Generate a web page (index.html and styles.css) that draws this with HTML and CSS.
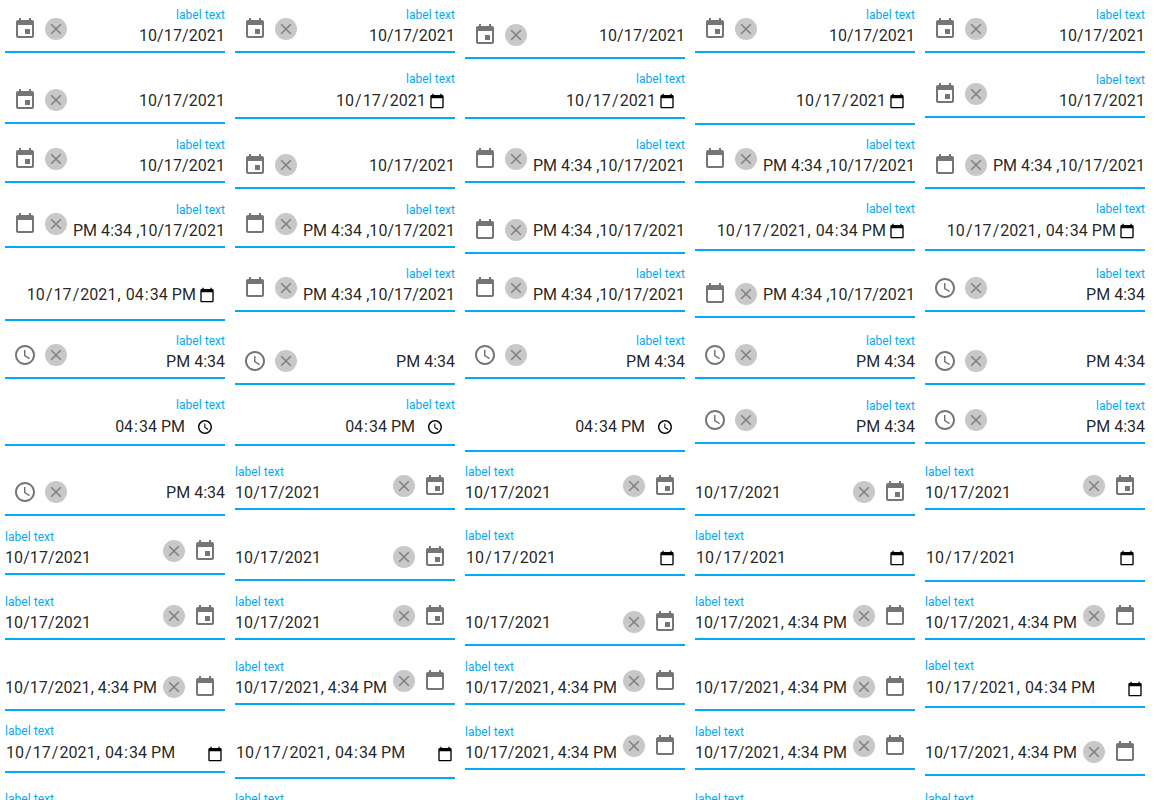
FILE: index.html
```html
<!DOCTYPE html>
<html lang="en">
<head>
<meta charset="utf-8">
<title>Date boxes</title>
<link rel="stylesheet" href="styles.css">
</head>
<body>
<svg class="sprite" aria-hidden="true">
  <symbol id="event" viewBox="0 0 24 24"><path d="M17 12h-5v5h5v-5zM16 1v2H8V1H6v2H5c-1.1 0-2 .9-2 2v14c0 1.1.9 2 2 2h14c1.1 0 2-.9 2-2V5c0-1.1-.9-2-2-2h-1V1h-2zm3 18H5V8h14v11z"/></symbol>
  <symbol id="calendar" viewBox="0 0 24 24"><path d="M16 1v2H8V1H6v2H5c-1.1 0-2 .9-2 2v14c0 1.1.9 2 2 2h14c1.1 0 2-.9 2-2V5c0-1.1-.9-2-2-2h-1V1h-2zm3 18H5V8h14v11z"/></symbol>
  <symbol id="clock" viewBox="0 0 24 24"><path d="M12 2C6.5 2 2 6.5 2 12s4.500 10 10 10 10-4.500 10-10S17.500 2 12 2zm0 18c-4.400 0-8-3.600-8-8s3.600-8 8-8 8 3.600 8 8-3.600 8-8 8zm.5-13H11v6l5.200 3.200.8-1.300-4.500-2.700V7z"/></symbol>
  <symbol id="time-picker" viewBox="0.5 0.5 23 23"><path d="M12 2C6.5 2 2 6.5 2 12s4.500 10 10 10 10-4.500 10-10S17.500 2 12 2zm0 18c-4.400 0-8-3.600-8-8s3.600-8 8-8 8 3.600 8 8-3.600 8-8 8zm.5-13H11v6l5.200 3.200.8-1.300-4.500-2.700V7z"/></symbol>
  <symbol id="clear" viewBox="0 0 22 22"><circle cx="11" cy="11" r="11" fill="#c8c8c8"/><path d="M6.200 6.200l9.600 9.600M15.800 6.200l-9.600 9.600" stroke="#7f7f7f" stroke-width="1.500" fill="none"/></symbol>
  <symbol id="picker" viewBox="0 0 24 24"><path d="M20 3h-1V1h-2v2H7V1H5v2H4c-1.100 0-2 .9-2 2v16c0 1.100.9 2 2 2h16c1.100 0 2-.9 2-2V5c0-1.100-.9-2-2-2zm0 18H4V8h16v13z"/></symbol>
</svg>
<main class="boxes" id="boxes"></main>
<script src="boxes.js"></script>
</body>
</html>
```
FILE: styles.css
```css
body {
  margin: 0;
  height: 800px;
  overflow: hidden;
  background: #fff;
  color: rgba(0, 0, 0, 0.87);
  font-family: Roboto, "Liberation Sans", sans-serif;
  font-size: 16px;
}
.sprite { display: none; }
.boxes {
  box-sizing: border-box;
  height: 800px;
  padding: 5px 5px 0;
  overflow: hidden;
}
.row {
  display: flex;
  align-items: flex-start;
  gap: 10px;
  height: 65px;
}
.row.short { height: 64px; }
.row.mid { height: 66px; }
.row.tall { height: 67px; }
.box {
  box-sizing: border-box;
  display: flex;
  flex: none;
  width: 220px;
  height: 48px;
  border-bottom: 2px solid #03a9f4;
}
.box.rtl { flex-direction: row-reverse; }
.box.bare { height: 54px; }
.box.n-date { height: 49px; }
.box.n-time { height: 50px; }
.box.n-datetime { height: 51px; }
.box.n-date.bare { height: 55px; }
.box.n-time.bare { height: 56px; }
.box.n-datetime.bare { height: 57px; }

.content {
  flex: 1;
  min-width: 0;
  padding-top: 3px;
  white-space: nowrap;
}
.native .content { padding-top: 2px; }
.bare .content { padding-top: 20px; }
.rtl .content { text-align: right; }
.label {
  height: 14px;
  margin-bottom: 3px;
  color: #03a9f4;
  font-size: 12px;
  line-height: 14px;
  letter-spacing: 0.04px;
}
.native .label { margin-bottom: 4px; }
.value {
  height: 20px;
  line-height: 22px;
}
.date .value { letter-spacing: 0.09px; }
.datetime .value { letter-spacing: 0.05px; }
.native .value { display: flex; }
.rtl.native .value { justify-content: flex-end; }
.fields { white-space: pre; }
.seg { padding: 0 1px; }
.seg.minute { padding-right: 0; }
.seg.period { padding-left: 0; }

.buttons {
  display: flex;
  flex: none;
  gap: 8px;
  align-items: center;
  height: 24px;
  padding: 12px 8px 0 0;
}
.rtl .buttons {
  flex-direction: row-reverse;
  padding: 12px 0 0 8px;
}
.box.bare .buttons { padding-top: 18px; }
.icon {
  width: 24px;
  height: 24px;
  fill: #757575;
}
.clear { width: 22px; height: 22px; }
.picker {
  flex: none;
  width: 16px;
  height: 16px;
  margin: 3px 10px 0 auto;
  fill: #000;
}
.n-datetime .picker { margin: 4px 2px 0 auto; }
.rtl .picker { margin: 3px 10px 0 2px; }
.rtl.n-time .picker { margin: 3px 12px 0 11px; }
```
FILE: boxes.js
```js
// Each entry: type, "-" suffix for a box without label, "!" prefix for a browser-style box.
const rows = [
  ["", "date date date- date date"],
  ["", "date- !date !date !date- date"],
  ["", "date date- datetime datetime datetime-"],
  ["short", "datetime datetime datetime- !datetime !datetime"],
  ["tall", "!datetime- datetime datetime datetime- time"],
  ["", "time time- time time time-"],
  ["mid", "!time !time !time- time time"],
  ["", "time- date date date- date"],
  ["", "date date- !date !date !date-"],
  ["", "date date date- datetime datetime"],
  ["", "datetime- datetime datetime datetime- !datetime"],
  ["tall", "!datetime !datetime- datetime datetime datetime-"],
  ["", "time time time- time time"]
];

// Left-to-right and right-to-left forms of each value.
const text = {
  date: ["10/17/2021", "10/17/2021"],
  datetime: ["10/17/2021, 4:34 PM", "PM 4:34 ,10/17/2021"],
  time: ["4:34 PM", "PM 4:34"]
};
const fields = {
  date: "10/17/2021",
  datetime: "10/17/2021, 04:34 PM",
  time: "04:34 PM"
};
const icons = { date: "event", datetime: "calendar", time: "clock" };
const use = (id, cls) => `<svg class="${cls}"><use href="#${id}"/></svg>`;
const seg = (part) => {
  const extra = part === "34" ? " minute" : part === "PM" ? " period" : "";
  return `<span class="seg${extra}">${part}</span>`;
};

function box(spec, rtl) {
  const native = spec.startsWith("!");
  const bare = spec.endsWith("-");
  const type = spec.replace(/[!-]/g, "");
  const cls = ["box", type, rtl && "rtl", bare && "bare", native && "native n-" + type].filter(Boolean).join(" ");
  const label = bare ? "" : '<div class="label">label text</div>';
  if (native) {
    const icon = type === "time" ? "time-picker" : "picker";
    return `<div class="${cls}"><div class="content">${label}<div class="value"><span class="fields">${fields[type].replace(/\w+/g, seg)}</span>${use(icon, "picker")}</div></div></div>`;
  }
  return `<div class="${cls}"><div class="content">${label}<div class="value">${text[type][rtl ? 1 : 0]}</div></div>
    <div class="buttons">${use("clear", "clear")}${use(icons[type], "icon")}</div></div>`;
}

document.getElementById("boxes").innerHTML = rows.map(([size, specs], r) =>
  `<div class="row ${size}">${specs.split(" ").map((s, c) => box(s, r * 5 + c < 36)).join("")}</div>`
).join("");
```
